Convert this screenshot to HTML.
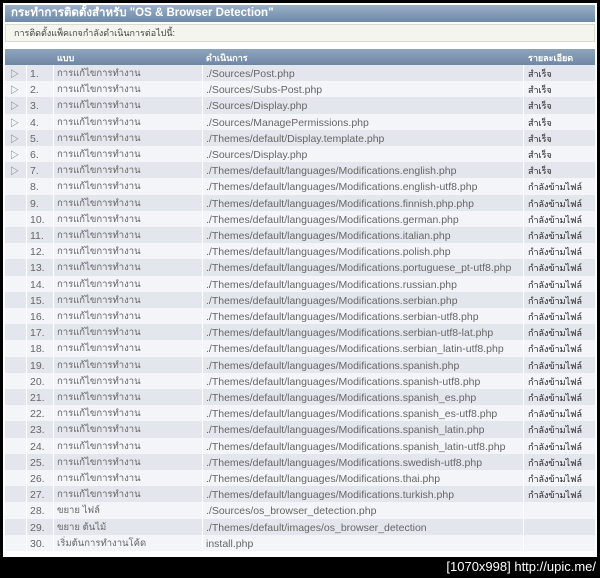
<!DOCTYPE html><html><head><meta charset="utf-8"><style>
*{margin:0;padding:0;box-sizing:border-box}
body{width:600px;height:578px;background:#000;position:relative;overflow:hidden;font-family:"Liberation Sans","Noto Sans CJK SC",sans-serif;}
#panel{position:absolute;left:3px;top:3px;width:594px;height:554px;background:#fff}
#title{position:absolute;left:5px;top:5px;width:590px;height:17px;background:linear-gradient(#9bb0c8,#6e88a8);color:#fff;font-weight:bold;font-size:11.5px;line-height:17px;padding-left:6px}
#info{position:absolute;left:5px;top:24px;width:590px;height:18px;background:#f4f5ee;border:1px solid #d8dccc;font-size:9px;color:#444;line-height:16px;padding-left:8px}
#head{position:absolute;left:5px;top:49px;width:590px;height:16px;background:linear-gradient(#8ea4bd,#6f87a5);color:#fff;font-weight:bold;font-size:9px;line-height:16px}
.r{position:absolute;left:5px;width:590px;height:16.2px;font-size:10.5px;color:#666;line-height:16px}
.r span,#head span{position:absolute;top:1px;white-space:nowrap;line-height:16px}
.o{background:#e3e7ed}.e{background:#f3f5f8}
.c1{left:5px;font-size:9px}.c2{left:25px}.c3{left:52px;font-size:9.5px}.c4{left:201px}.c5{left:523px;color:#222;font-size:9px}
.sep{position:absolute;top:65px;width:1px;height:486px;background:#fff}
#foot{position:absolute;right:4px;top:559px;color:#fff;font-size:13px;font-family:"Liberation Sans Narrow","Liberation Sans",sans-serif}
</style></head><body>
<div id="panel"></div>
<div id="title">กระทำการติดตั้งสำหรับ "OS &amp; Browser Detection"</div>
<div id="info">การติดตั้งแพ็คเกจกำลังดำเนินการต่อไปนี้:</div>
<div id="head"><span style="left:52px">แบบ</span><span style="left:201px">ดำเนินการ</span><span style="left:523px">รายละเอียด</span></div>
<div id="rows"></div>
<div class="sep" style="left:26px"></div><div class="sep" style="left:53px"></div><div class="sep" style="left:202px"></div><div class="sep" style="left:523px"></div>
<div id="foot">[1070x998] http://upic.me/</div>
<script>
var m="การแก้ไขการทำงาน",L="./Themes/default/languages/Modifications.";
var d=[[m,"./Sources/Post.php",1],[m,"./Sources/Subs-Post.php",1],[m,"./Sources/Display.php",1],[m,"./Sources/ManagePermissions.php",1],[m,"./Themes/default/Display.template.php",1],[m,"./Sources/Display.php",1],[m,L+"english.php",1]];
["english-utf8","finnish.php","german","italian","polish","portuguese_pt-utf8","russian","serbian","serbian-utf8","serbian-utf8-lat","serbian_latin-utf8","spanish","spanish-utf8","spanish_es","spanish_es-utf8","spanish_latin","spanish_latin-utf8","swedish-utf8","thai","turkish"].forEach(function(x){d.push([m,L+x+".php",2])});
d.push(["ขยาย ไฟล์","./Sources/os_browser_detection.php",0],["ขยาย ต้นไม้","./Themes/default/images/os_browser_detection",0],["เริ่มต้นการทำงานโค้ด","install.php",0]);
var h="";d.forEach(function(r,i){var t=65+i*16.2;h+='<div class="r '+(i%2?'e':'o')+'" style="top:'+t+'px">'+(r[2]==1?'<span class="c1">&#9655;</span>':'')+'<span class="c2">'+(i+1)+'.</span><span class="c3">'+r[0]+'</span><span class="c4">'+r[1]+'</span><span class="c5">'+(r[2]==1?'สำเร็จ':r[2]==2?'กำลังข้ามไฟล์':'')+'</span></div>'});
document.getElementById("rows").innerHTML=h;
</script>
</body></html>
